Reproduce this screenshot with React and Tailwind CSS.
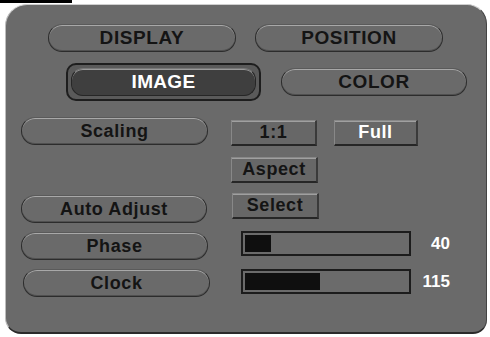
const FONT = { fontFamily: '"Liberation Sans", Arial, sans-serif' }

function Pill({ label, className = '' }) {
  return (
    <div
      className={`h-[28px] rounded-[14px] border border-[#2c2c2c] border-t-[#5a5a5a] bg-[#6a6a6a] shadow-[inset_0_1px_0_#a8a8a8,inset_0_-1px_0_#505050] flex items-center justify-center font-bold tracking-[0.6px] text-[#141414] ${className}`}
    >
      {label}
    </div>
  )
}

function Square({ label, light, className = '' }) {
  return (
    <div
      className={`h-[26px] border border-[#888] border-b-2 border-r-2 border-b-[#262626] border-r-[#3a3a3a] bg-[#676767] shadow-[inset_0_1px_0_#a0a0a0] flex items-center justify-center text-[18px] font-bold tracking-[0.6px] ${light ? 'text-white' : 'text-[#141414]'} ${className}`}
    >
      {label}
    </div>
  )
}

function Bar({ value, max = 255 }) {
  const w = Math.round((value / max) * 166)
  return (
    <div className="flex items-center">
      <div className="w-[172px] h-[25px] border-2 border-[#1c1c1c] bg-[#6b6b6b] p-[2px] flex">
        <div className="h-full bg-[#0f0f0f]" style={{ width: w }} />
      </div>
      <span className="ml-auto w-[42px] text-right text-[17px] font-bold text-white pr-[3px]">{value}</span>
    </div>
  )
}

export default function App() {
  return (
    <div className="w-[490px] h-[337px] bg-white overflow-hidden" style={FONT}>
      <div className="w-[72px] h-[3px] bg-black" />
      <div className="ml-[5px] mt-[1px] w-[482px] h-[330px] bg-[#6a6a6a] rounded-tl-[22px] rounded-tr-[20px] rounded-bl-[16px] rounded-br-[14px] border-t border-l border-t-[#cfcfcf] border-l-[#bdbdbd] border-b-2 border-b-[#2a2a2a] border-r border-r-[#444] pl-[15px] pt-[19px]">

        <div className="flex gap-[19px] ml-[27px]">
          <Pill label="DISPLAY" className="w-[188px] text-[19px]" />
          <Pill label="POSITION" className="w-[188px] text-[19px]" />
        </div>

        <div className="flex items-center mt-[11px] ml-[45px]">
          <div className="w-[195px] h-[38px] rounded-[10px] border-2 border-[#1e1e1e] bg-[#5a5a5a] p-[3px]">
            <div className="h-full rounded-[12px] border border-[#262626] border-t-[#777] bg-[#3f3f3f] shadow-[inset_0_1px_0_#9a9a9a] flex items-center justify-center text-[19px] font-bold text-white tracking-[0.3px]">
              IMAGE
            </div>
          </div>
          <Pill label="COLOR" className="w-[186px] ml-[20px] text-[19px]" />
        </div>

        <div className="mt-[16px] grid grid-cols-[187px_1fr] gap-x-[23px]">
          <div className="flex flex-col">
            <Pill label="Scaling" className="w-[187px] text-[18px]" />
            <Pill label="Auto Adjust" className="w-[186px] mt-[50px] text-[18px]" />
            <Pill label="Phase" className="w-[187px] mt-[9px] text-[18px]" />
            <Pill label="Clock" className="w-[187px] mt-[9px] ml-[2px] text-[18px]" />
          </div>
          <div className="flex flex-col pt-[3px]">
            <div className="flex gap-[17px]">
              <Square label="1:1" className="w-[86px]" />
              <Square label="Full" light className="w-[84px]" />
            </div>
            <Square label="Aspect" className="w-[87px] mt-[11px]" />
            <Square label="Select" className="w-[87px] mt-[10px] ml-[1px]" />
            <div className="mt-[12px] ml-[10px] w-[212px] flex flex-col gap-[12px]">
              <Bar value={40} />
              <Bar value={115} />
            </div>
          </div>
        </div>
      </div>
    </div>
  )
}
